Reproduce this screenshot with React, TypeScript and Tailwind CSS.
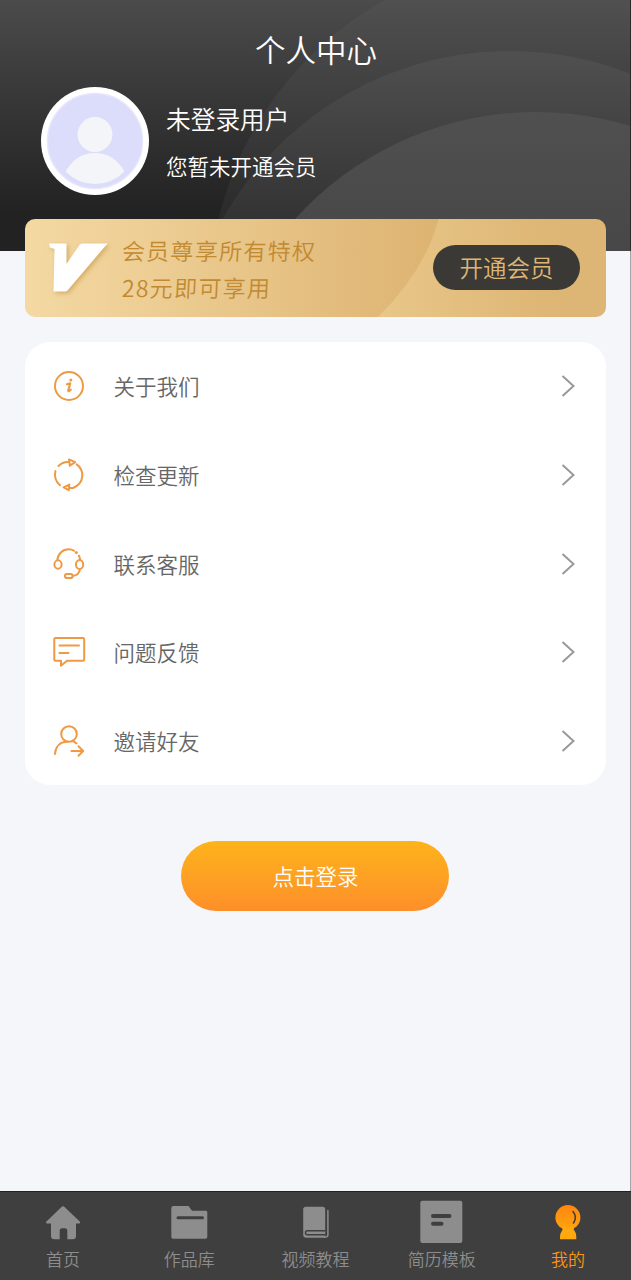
import type { ReactNode } from "react";

interface MenuItem {
  id: string;
  label: string;
  icon: ReactNode;
}

interface TabItem {
  id: string;
  label: string;
  icon: ReactNode;
  active?: boolean;
}

const menuItems: MenuItem[] = [
  {
    id: "about",
    label: "关于我们",
    icon: (
      <>
        <circle cx="17" cy="17" r="14" />
        <path d="M15 15.2 L18.2 14.4 L16.2 21.6 Q16.4 23 18.8 20.8" strokeWidth="2.2" />
        <circle cx="18.8" cy="11" r="1.5" fill="currentColor" stroke="none" />
      </>
    ),
  },
  {
    id: "update",
    label: "检查更新",
    icon: (
      <>
        <path d="M6.5 8 Q10.5 3.8 16.5 4" />
        <path d="M17 1.4 L23.2 4.2 L17.8 7.6 Z" />
        <path d="M24.7 6.4 C32.5 12 33 25 21 30 L18 30" />
        <path d="M17.3 26.6 L11.6 29.3 L16.8 32.2 Z" />
        <path d="M3.4 13 C2.2 18.5 3.6 23.5 8 27.3" />
      </>
    ),
  },
  {
    id: "service",
    label: "联系客服",
    icon: (
      <>
        <path d="M5.3 13 C6 6.5 11 2.3 16.5 2.3 C19 2.3 20.8 2.9 22 3.8" />
        <circle cx="24.3" cy="5.5" r="1.5" fill="currentColor" stroke="none" />
        <path d="M26.8 8.5 Q28 10.5 28.2 13" />
        <ellipse cx="6" cy="17.5" rx="3.6" ry="4.2" />
        <ellipse cx="27.6" cy="17.5" rx="3.6" ry="4.5" />
        <path d="M28 22 C27.5 26.5 24.5 28.6 20.5 29" />
        <rect x="13" y="27" width="7.6" height="4" rx="1.8" />
      </>
    ),
  },
  {
    id: "feedback",
    label: "问题反馈",
    icon: (
      <>
        <path d="M3.5 3 H31 Q32.2 3 32.2 4.3 V24.5 Q32.2 25.8 31 25.8 H15 L9 30.8 V25.8 H3.5 Q2.3 25.8 2.3 24.5 V4.3 Q2.3 3 3.5 3 Z" />
        <path d="M7.5 10.5 H27 M7.5 18 H16.5" />
      </>
    ),
  },
  {
    id: "invite",
    label: "邀请好友",
    icon: (
      <>
        <circle cx="17" cy="10" r="7.8" />
        <path d="M3 30 C3.5 22.5 8 18 15 17.8 M20.5 16.7 L24.5 19.3" />
        <path d="M19.5 27 H31 M26.5 22.3 L31.2 27 L26.5 31.7" />
      </>
    ),
  },
];

const tabItems: TabItem[] = [
  {
    id: "home",
    label: "首页",
    icon: (
      <path d="M21 6.6 Q22 5.8 23 6.6 L39 21.8 Q39.6 23.4 38.2 23.6 H35 V36 Q35 39.3 31.8 39.3 H26.3 V31 Q26.3 28.3 24 28.3 H21 Q18.7 28.3 18.7 31 V39.3 H13.5 Q10 39.3 10 36 V23.6 H6 Q4.4 23.4 5.2 21.8 Z" />
    ),
  },
  {
    id: "works",
    label: "作品库",
    icon: (
      <>
        <path d="M6.5 6 H21.5 L25 10.7 H39 Q40.3 10.7 40.3 12.2 V37 Q40.3 38.8 38.5 38.8 H6 Q4.3 38.8 4.3 37 V8 Q4.3 6 6.5 6 Z" />
        <path d="M11 17.8 H35.5" stroke="#3f3f3f" strokeWidth="3" strokeLinecap="round" />
      </>
    ),
  },
  {
    id: "videos",
    label: "视频教程",
    icon: (
      <>
        <path d="M12 6.8 H28.5 Q31.2 6.8 31.2 9.5 V37.7 H12.5 Q9.2 37.7 9.2 34.5 V9.5 Q9.2 6.8 12 6.8 Z" />
        <path d="M31.2 30.8 H13.3 Q11.5 30.8 11.5 32.7 Q11.5 34.7 13.3 34.7 H31.2" fill="none" stroke="#3f3f3f" strokeWidth="1.4" />
        <path d="M33.9 10.5 V35 Q33.9 37 31.5 37 H30" fill="none" stroke="currentColor" strokeWidth="1.5" strokeLinecap="round" />
      </>
    ),
  },
  {
    id: "templates",
    label: "简历模板",
    icon: (
      <>
        <rect x="0.3" y="0.7" width="42" height="42.3" rx="2" />
        <path d="M13 16 H29.5" stroke="#3f3f3f" strokeWidth="4" strokeLinecap="round" />
        <path d="M13 23.7 H21.5" stroke="#3f3f3f" strokeWidth="4" strokeLinecap="round" />
      </>
    ),
  },
  {
    id: "mine",
    label: "我的",
    active: true,
    icon: (
      <>
        <circle cx="21.9" cy="17.5" r="12.5" fill="url(#mine)" />
        <path d="M16.5 27.5 H27.5 Q27.5 30 29 31.5 Q30.3 33.5 30.3 37 V39.3 H14 V37 Q14 33.5 15.5 31.5 Q17 30 16.5 27.5 Z" fill="#ffa90f" />
        <path d="M27 11.5 Q31.5 17 27.5 23" fill="none" stroke="#3f3f3f" strokeWidth="1.6" strokeLinecap="round" />
      </>
    ),
  },
];

const HeaderBackdrop = () => (
  <svg className="absolute inset-0" width="631" height="251" viewBox="0 0 631 251">
    <defs>
      <linearGradient id="arcA" gradientUnits="userSpaceOnUse" x1="0" y1="0" x2="0" y2="220">
        <stop offset="0" stopColor="#505050" />
        <stop offset="1" stopColor="#2a2a2a" />
      </linearGradient>
      <linearGradient id="arcB" gradientUnits="userSpaceOnUse" x1="0" y1="50" x2="0" y2="220">
        <stop offset="0" stopColor="#505050" />
        <stop offset="1" stopColor="#333" />
      </linearGradient>
      <linearGradient id="arcC" gradientUnits="userSpaceOnUse" x1="0" y1="112" x2="0" y2="250">
        <stop offset="0" stopColor="#505050" />
        <stop offset="1" stopColor="#474747" />
      </linearGradient>
    </defs>
    <circle cx="551" cy="299" r="342" fill="url(#arcA)" />
    <circle cx="510" cy="381" r="330" fill="url(#arcB)" />
    <circle cx="536" cy="437" r="325" fill="url(#arcC)" />
  </svg>
);

const Avatar = () => (
  <svg width="108" height="108" viewBox="0 0 108 108">
    <circle cx="54" cy="54" r="54" fill="#fff" />
    <circle cx="54" cy="54" r="47.5" fill="#dcdcfb" stroke="#e6e6fc" strokeWidth="1.5" />
    <circle cx="54" cy="47.5" r="17.5" fill="#f3f5f9" />
    <path d="M24.5 84.5 Q35 66 54 66 Q73 66 83.5 84.5 Q71 97 54 97 Q37 97 24.5 84.5 Z" fill="#f3f5f9" />
  </svg>
);

const VipBanner = () => (
  <section className="relative mx-[25px] h-[98px] w-[581px] overflow-hidden rounded-[10px]">
    <svg className="absolute inset-0" width="581" height="98" viewBox="0 0 581 98">
      <defs>
        <linearGradient id="sheen" x1="0" y1="0" x2="1" y2="0">
          <stop offset="0" stopColor="#f4d9a3" />
          <stop offset="1" stopColor="#ddb371" />
        </linearGradient>
        <linearGradient id="tail" x1="0" y1="0" x2="1" y2="0">
          <stop offset="0" stopColor="#e9c88a" />
          <stop offset="0.8" stopColor="#ddb574" />
        </linearGradient>
      </defs>
      <rect x="340" width="241" height="98" fill="url(#tail)" />
      <path d="M0 0 H413.5 Q400 52 353 98 H0 Z" fill="url(#sheen)" />
    </svg>
    <div className="relative flex h-full items-center pl-6 pr-[26px]">
      <svg
        className="shrink-0 drop-shadow-[2px_2px_2px_rgba(190,135,50,0.5)]"
        width="60"
        height="50"
        viewBox="0 0 60 50"
        fill="#fff"
      >
        <path d="M0 0.5 H17.5 V21 L30.5 2 Q31.5 0.5 33.5 0.5 H58.5 L18.5 47.5 Q17.5 48.5 16 48.5 H4.5 L5.5 6 L1 4.5 Z" />
      </svg>
      <div className="ml-[13px] flex-1 pt-px text-[23px] leading-[37px] tracking-[1.3px] text-[#c28a30]">
        <p className="-skew-x-3">会员尊享所有特权</p>
        <p className="-skew-x-3">28元即可享用</p>
      </div>
      <button className="mb-px h-[45px] w-[147px] rounded-full bg-[#3a3935] text-[23.5px] leading-none text-[#deb574]">
        开通会员
      </button>
    </div>
  </section>
);

const MenuList = () => (
  <ul className="ml-[25px] mr-6 mt-[25px] rounded-[25px] bg-white">
    {menuItems.map((item) => (
      <li key={item.id} className="flex h-[88.7px] items-center pl-[27px] pr-[31px]">
        <svg
          className="text-[#ee9a45]"
          width="34"
          height="34"
          viewBox="0 0 34 34"
          fill="none"
          stroke="currentColor"
          strokeWidth="2"
          strokeLinecap="round"
          strokeLinejoin="round"
        >
          {item.icon}
        </svg>
        <span className="ml-[27.5px] flex-1 text-[21.5px] text-[#666]">{item.label}</span>
        <svg width="14" height="22" viewBox="0 0 14 22" fill="none" stroke="#999" strokeWidth="2">
          <path d="M1.5 1 L12.5 11 L1.5 21" />
        </svg>
      </li>
    ))}
  </ul>
);

const TabBar = () => (
  <nav className="flex h-[89px] border-t border-[#222] bg-[#3f3f3f]">
    {tabItems.map((tab) => (
      <div
        key={tab.id}
        className={`flex flex-1 flex-col items-center pt-[8px] ${
          tab.active ? "text-[#ff9312]" : "text-[#8d8d8d]"
        }`}
      >
        <svg width="44" height="44" viewBox="0 0 44 44" fill="currentColor">
          {tab.icon}
        </svg>
        <span className="mt-[3px] text-[17px] leading-6">{tab.label}</span>
      </div>
    ))}
  </nav>
);

export default function App() {
  return (
    <div className="flex h-[1280px] w-[631px] flex-col overflow-hidden bg-[#f4f6fa] font-['Noto_Sans_CJK_SC','Noto_Sans',sans-serif] font-[350]">
      <svg width="0" height="0" className="absolute">
        <linearGradient id="mine" x1="0" y1="0" x2="0" y2="1">
          <stop offset="0" stopColor="#ff860f" />
          <stop offset="1" stopColor="#ffa40f" />
        </linearGradient>
      </svg>
      <header className="relative h-[251px] shrink-0 overflow-hidden border-r border-[#2b2b2b] bg-gradient-to-b from-[#4b4b4b] to-[#222] to-85% text-white">
        <HeaderBackdrop />
        <div className="relative">
          <h1 className="pl-0.5 pt-[27px] text-center text-[30.5px] font-[350] leading-[44px]">个人中心</h1>
          <div className="mt-[16px] flex items-start pl-[41px]">
            <Avatar />
            <div className="ml-[17px] pt-[13px]">
              <p className="text-[24.7px] leading-[36px]">未登录用户</p>
              <p className="mt-[14px] text-[21.5px] leading-[32px]">您暂未开通会员</p>
            </div>
          </div>
        </div>
      </header>
      <div className="relative -mt-[32px]">
        <VipBanner />
      </div>
      <div className="-mt-[66px] flex flex-1 flex-col border-r border-[#a3a5a8] pt-[66px]">
        <MenuList />
        <button className="mx-auto mt-[56px] h-[70px] w-[268px] rounded-full bg-gradient-to-b from-[#fdb31b] to-[#fd8f29] pl-px text-[21.5px] text-white">
          点击登录
        </button>
      </div>
      <TabBar />
    </div>
  );
}
